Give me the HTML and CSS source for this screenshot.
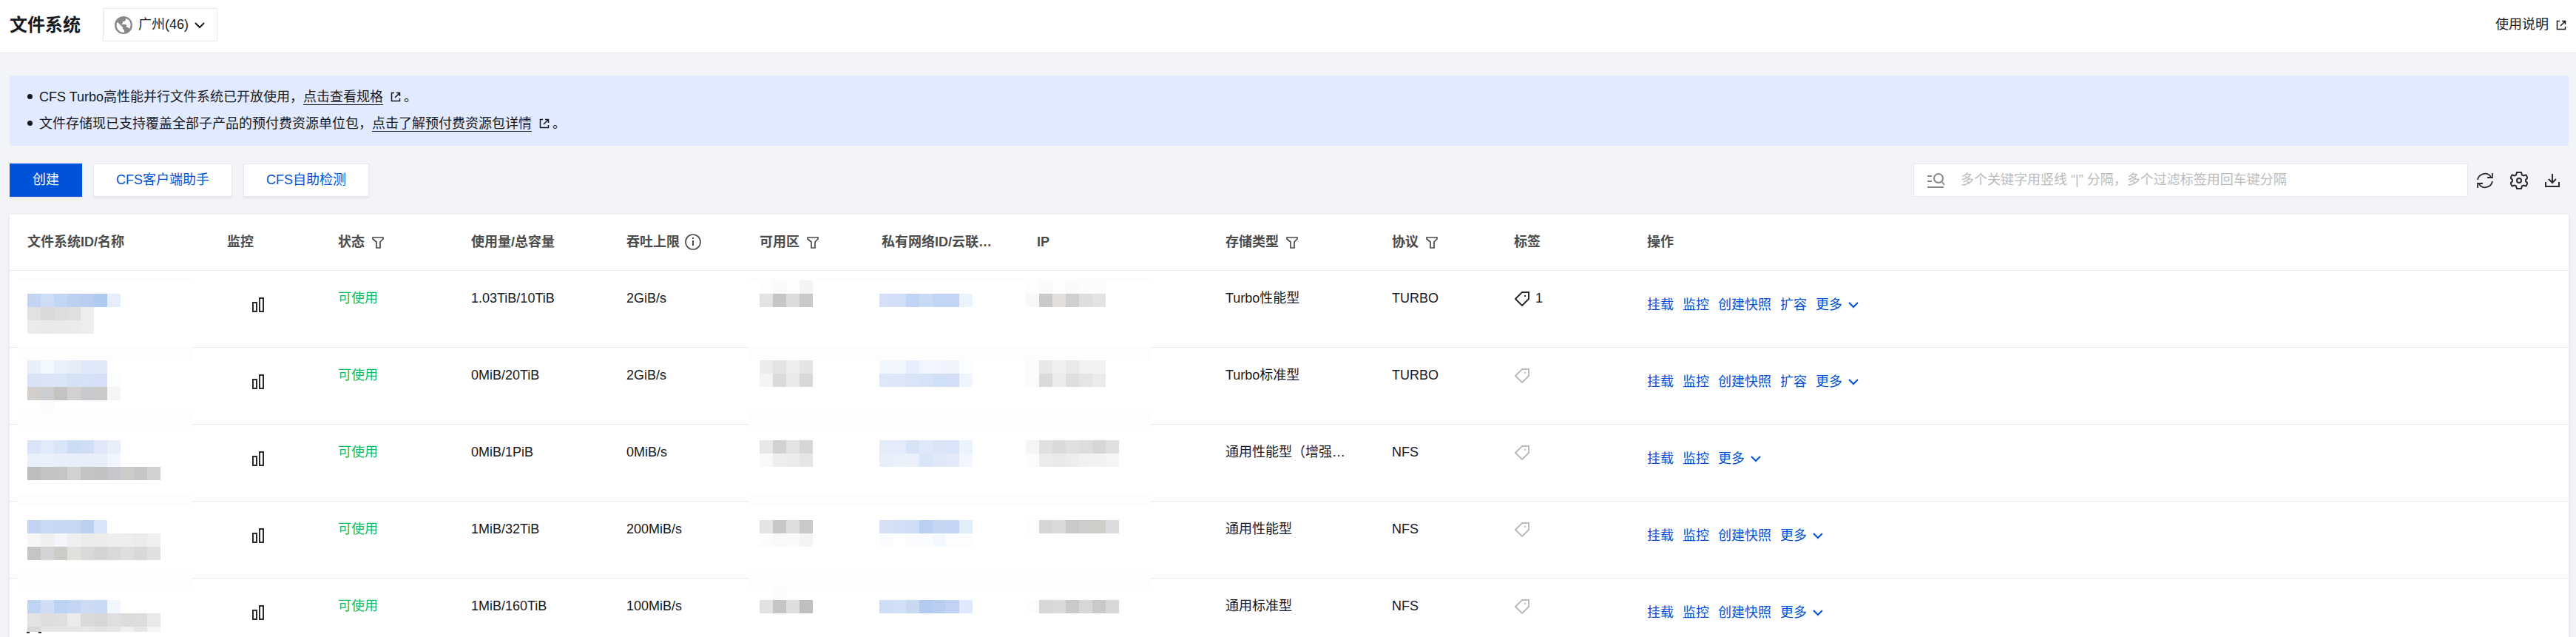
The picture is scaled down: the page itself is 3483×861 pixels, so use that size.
FILE: index.html
```html
<!DOCTYPE html>
<html lang="zh-CN">
<head>
    <meta charset="UTF-8">
    <meta name="viewport" content="width=device-width, initial-scale=1.0">
    <title>文件系统</title>
    <link rel="stylesheet" href="styles.css">
</head>
<body>

<!-- shared icons -->
<svg class="icon-defs" aria-hidden="true">
    <symbol id="i-globe" viewBox="0 0 24 24"><circle cx="12" cy="12" r="12" fill="#888"/><path d="M4 8l7 7v2l2 2v3C6 22 1 16 3 9zM15 3v2l-2 2h-2v2l-2 2h6l1 1v3h2l2 2c3-5 2-12-5-14z" fill="#fff"/></symbol>
    <symbol id="i-down" viewBox="0 0 14 12"><path d="M1 3l6 6 6-6" fill="none" stroke="currentColor" stroke-width="2"/></symbol>
    <symbol id="i-link" viewBox="0 0 14 14"><path d="M5 1.500H1.500v11h11V9M8 1.500h4.500V6M12 2L6 8" fill="none" stroke="currentColor" stroke-width="1.500"/></symbol>
    <symbol id="i-filter" viewBox="0 0 16 16"><path d="M1 1h14v2l-4 4v8H6V7L1 3z" fill="none" stroke="currentColor" stroke-width="1.700"/></symbol>
    <symbol id="i-info" viewBox="0 0 22 22"><circle cx="11" cy="11" r="10" fill="none" stroke="currentColor" stroke-width="1.700"/><path d="M10 5h2v2h-2zM10 9h2v7h-2z" fill="currentColor"/></symbol>
    <symbol id="i-bars" viewBox="0 0 16 20"><path d="M1 7h5v12H1zM10 1h5v18h-5z" fill="none" stroke="currentColor" stroke-width="2"/></symbol>
    <symbol id="i-tag" viewBox="0 0 20 20"><path d="M10 1h9v9l-9 9-9-9z" fill="none" stroke="currentColor" stroke-width="2"/><path d="M13 5h2v2h-2z" fill="currentColor"/></symbol>
    <symbol id="i-search" viewBox="0 0 24 20"><path d="M0 4h6M0 11h6M0 19h22M20 12l3 4" fill="none" stroke="currentColor" stroke-width="2"/><ellipse cx="15" cy="7" rx="6" ry="6" fill="none" stroke="currentColor" stroke-width="2"/></symbol>
    <symbol id="i-refresh" viewBox="0 0 22 22"><path d="M1 10a10 10 0 0 1 18-4M21 12a10 10 0 0 1-18 4M21 1v6h-7M1 21v-6h7" fill="none" stroke="currentColor" stroke-width="1.800"/></symbol>
    <symbol id="i-gear" viewBox="0 0 24 24"><path d="M9 1h6l1 3.500 2 1 3.500-1 2 4-2.500 2.500v2l2.500 2.500-2 4-3.500-1-2 1-1 3.500H9l-1-3.500-2-1-3.500 1-2-4L3 13v-2L.5 8.500l2-4 3.500 1 2-1z" fill="none" stroke="currentColor" stroke-width="2"/><circle cx="12" cy="12" r="3" fill="none" stroke="currentColor" stroke-width="2"/></symbol>
    <symbol id="i-download" viewBox="0 0 20 20"><path d="M10 1v12M5 8l5 5 5-5M1 12v6h18v-6" fill="none" stroke="currentColor" stroke-width="2"/></symbol>
</svg>

<header class="header">
    <h1>文件系统</h1>
    <button type="button" class="region">
        <svg width="24" height="24"><use href="#i-globe"/></svg>
        <span>广州(46)</span>
        <svg width="14" height="12"><use href="#i-down"/></svg>
    </button>
    <a class="help" href="#">使用说明<svg width="14" height="14"><use href="#i-link"/></svg></a>
</header>

<main class="content">
    <ul class="notice">
        <li>CFS Turbo高性能并行文件系统已开放使用，<a href="#">点击查看规格</a><svg width="14" height="14"><use href="#i-link"/></svg>。</li>
        <li>文件存储现已支持覆盖全部子产品的预付费资源单位包，<a href="#">点击了解预付费资源包详情</a><svg width="14" height="14"><use href="#i-link"/></svg>。</li>
    </ul>

    <div class="toolbar">
        <button type="button" class="btn btn-primary">创建</button>
        <button type="button" class="btn">CFS客户端助手</button>
        <button type="button" class="btn">CFS自助检测</button>
        <label class="search">
            <svg width="24" height="20"><use href="#i-search"/></svg>
            <input type="text" aria-label="搜索" placeholder="多个关键字用竖线 “|” 分隔，多个过滤标签用回车键分隔">
        </label>
        <div class="tools">
            <button type="button" aria-label="刷新"><svg width="22" height="22"><use href="#i-refresh"/></svg></button>
            <button type="button" aria-label="设置"><svg width="24" height="24"><use href="#i-gear"/></svg></button>
            <button type="button" aria-label="下载"><svg width="20" height="20"><use href="#i-download"/></svg></button>
        </div>
    </div>

    <div class="card">
        <table>
            <colgroup>
                <col class="c-id"><col class="c-monitor"><col class="c-status"><col class="c-usage"><col class="c-limit"><col class="c-zone">
                <col class="c-vpc"><col class="c-ip"><col class="c-type"><col class="c-proto"><col class="c-tag"><col>
            </colgroup>
            <thead>
                <tr>
                    <th>文件系统ID/名称</th>
                    <th>监控</th>
                    <th>状态<svg class="filter" width="16" height="16"><use href="#i-filter"/></svg></th>
                    <th>使用量/总容量</th>
                    <th>吞吐上限<svg class="info" width="22" height="22"><use href="#i-info"/></svg></th>
                    <th>可用区<svg class="filter" width="16" height="16"><use href="#i-filter"/></svg></th>
                    <th>私有网络ID/云联…</th>
                    <th>IP</th>
                    <th>存储类型<svg class="filter" width="16" height="16"><use href="#i-filter"/></svg></th>
                    <th>协议<svg class="filter" width="16" height="16"><use href="#i-filter"/></svg></th>
                    <th>标签</th>
                    <th>操作</th>
                </tr>
            </thead>
            <tbody>
                <tr>
                    <td></td>
                    <td class="monitor"><svg width="16" height="20"><use href="#i-bars"/></svg></td>
                    <td class="ok">可使用</td>
                    <td>1.03TiB/10TiB</td>
                    <td>2GiB/s</td>
                    <td></td><td></td><td></td>
                    <td>Turbo性能型</td>
                    <td>TURBO</td>
                    <td class="tag tag-on"><svg width="20" height="20"><use href="#i-tag"/></svg>1</td>
                    <td class="ops"><a href="#">挂载</a><a href="#">监控</a><a href="#">创建快照</a><a href="#">扩容</a><a href="#">更多<svg width="14" height="12"><use href="#i-down"/></svg></a></td>
                </tr>
                <tr>
                    <td></td>
                    <td class="monitor"><svg width="16" height="20"><use href="#i-bars"/></svg></td>
                    <td class="ok">可使用</td>
                    <td>0MiB/20TiB</td>
                    <td>2GiB/s</td>
                    <td></td><td></td><td></td>
                    <td>Turbo标准型</td>
                    <td>TURBO</td>
                    <td class="tag"><svg width="20" height="20"><use href="#i-tag"/></svg></td>
                    <td class="ops"><a href="#">挂载</a><a href="#">监控</a><a href="#">创建快照</a><a href="#">扩容</a><a href="#">更多<svg width="14" height="12"><use href="#i-down"/></svg></a></td>
                </tr>
                <tr>
                    <td></td>
                    <td class="monitor"><svg width="16" height="20"><use href="#i-bars"/></svg></td>
                    <td class="ok">可使用</td>
                    <td>0MiB/1PiB</td>
                    <td>0MiB/s</td>
                    <td></td><td></td><td></td>
                    <td>通用性能型（增强…</td>
                    <td>NFS</td>
                    <td class="tag"><svg width="20" height="20"><use href="#i-tag"/></svg></td>
                    <td class="ops"><a href="#">挂载</a><a href="#">监控</a><a href="#">更多<svg width="14" height="12"><use href="#i-down"/></svg></a></td>
                </tr>
                <tr>
                    <td></td>
                    <td class="monitor"><svg width="16" height="20"><use href="#i-bars"/></svg></td>
                    <td class="ok">可使用</td>
                    <td>1MiB/32TiB</td>
                    <td>200MiB/s</td>
                    <td></td><td></td><td></td>
                    <td>通用性能型</td>
                    <td>NFS</td>
                    <td class="tag"><svg width="20" height="20"><use href="#i-tag"/></svg></td>
                    <td class="ops"><a href="#">挂载</a><a href="#">监控</a><a href="#">创建快照</a><a href="#">更多<svg width="14" height="12"><use href="#i-down"/></svg></a></td>
                </tr>
                <tr>
                    <td></td>
                    <td class="monitor"><svg width="16" height="20"><use href="#i-bars"/></svg></td>
                    <td class="ok">可使用</td>
                    <td>1MiB/160TiB</td>
                    <td>100MiB/s</td>
                    <td></td><td></td><td></td>
                    <td>通用标准型</td>
                    <td>NFS</td>
                    <td class="tag"><svg width="20" height="20"><use href="#i-tag"/></svg></td>
                    <td class="ops"><a href="#">挂载</a><a href="#">监控</a><a href="#">创建快照</a><a href="#">更多<svg width="14" height="12"><use href="#i-down"/></svg></a></td>
                </tr>
            </tbody>
        </table>
        <!-- mosaics that hide ids, zones, networks and addresses -->
        <svg class="mask mask-id" id="maskId" width="236" height="482"></svg>
        <svg class="mask mask-net" id="maskNet" width="544" height="482"></svg>
    </div>
</main>

<script src="mask.js"></script>
</body>
</html>
```

FILE: mask.js
```js
// mosaic tiles: [row, first column, tile colours]
const SIZE = 18;
const HEIGHT = 478;

const idTiles = [
  [1, 0, "c3d3f2 cfdcf5 c2d6f3 bdd0f2 bacdf0 b0c9f1 e6eefb"],
  [2, 0, "e1e1e1 dad8d9 dddddd dfe1e0 ededed"],
  [3, 0, "ebebeb ebe8e9 e9ebea ebebeb ededed"],
  [6, 0, "e8effb f3f7ff e8f0fb e6edf9 dfe9f9 e0e9f7"],
  [7, 0, "d9e3f7 dae5f6 d9e6f7 d5e1f5 d6e2f5 d5e0f8 fcfdff"],
  [8, 0, "d2cecb cccdd1 c4c3c1 d3d1cf c9cace cacaca f5f5f5"],
  [9, 1, "fbfbfb"],
  [12, 0, "dae4f8 e1eaf9 d9e6f8 ccdcf5 cfddf5 dfe7f9 e8eefa"],
  [13, 0, "e9effb ebf1fc e8effb e8effb e8effb e7effb f1f5ff"],
  [14, 0, "bfbcbd c3c3c4 c5c5c5 d3d1cf c4c4c4 c3c1bf c6c7cc cdcbca c5c6c8 d2d2d2"],
  [18, 0, "c2d2f2 c9d8f4 c7d7f4 c6d6f3 bed0f1 d9e5f9"],
  [19, 0, "f6f6f6 f0f0f0 f3f5fa eeeff0 ebebeb ececea eeeeee ededeb ebebea efefef"],
  [20, 0, "c7c4c5 d3d4d5 cbcbc8 e0e0dd d9d9d9 d4d3d1 d8d9db e0dedc d7d8da dfe1e0"],
  [24, 0, "bfd3f3 d0def5 bdd3f4 c3d5f4 cddaf4 c9d9f4 f2f6fe"],
  [25, 0, "e3e3e3 dedede dfdfdf ebebeb dadada d8d7d5 dedfe1 dedcdb dcdddf e9e9e9"],
  [26, 0, "dad8d6 e4e5e6 e5e5e5 e5e5e5 e7e7e7 e4e4e4 e5e6e8 f0f0f0 e6e6e6 f5f5f5"]
];

const netTiles = [
  [0, 0, "fdfdfd fafafa fdfdfd f4f4f4"],
  [0, 20, "fdfdfd fafafa fdfdfd f9fbfa fcfcfc fcfcfc"],
  [1, 0, "e3e3e3 c6c6c6 dcdcdc c9c9c9"],
  [1, 9, "d5e0f8 d0dff7 c1d4f5 c8daf4 c2d5f4 c3d4f4 ebf3fd"],
  [1, 20, "f9f8f7 c9cacc e2dfdd cfcfcf dcdfdd e3e3e3"],
  [6, 0, "ebedec e3e3e3 eeeeee e4e4e4"],
  [6, 9, "f2f6ff f2f6ff e7eefb f0f5ff f0f5ff eff4fc fcfdff"],
  [6, 20, "fbfbfb e7e9e8 f0f0f0 e9e9e9 f2f2f2 f2f2f2"],
  [7, 0, "f4f4f4 dadada eaeaea d8d8d8"],
  [7, 9, "dfe8fa dce6f7 d8e5f8 d6e2f8 cfdff5 d2dff6 eff4fe"],
  [7, 20, "fbfbfb dadada ececea dcdfdd e5e5e5 ebebeb"],
  [12, 0, "e8e8e8 d2d2d2 e3e3e3 d6d6d6"],
  [12, 9, "e4ecf9 e4ebfa d6e3f7 dfe9f9 dae6f8 d9e4f8 eaf3fb"],
  [12, 20, "f6f5f3 e0e0e0 dadada e0e0e0 dcdddf d8d6d4 dedfe1"],
  [13, 0, "f9f9f9 eeeeee ececec e6e6e6"],
  [13, 9, "e7eefa e9f1fb e9f0fa d9e5f8 e0e9f8 e3e9f8 f2f6ff"],
  [13, 20, "fcfcfc ebedec eaeaea ededed f1f1f1 f2f2f2 f5f5f5"],
  [18, 0, "e3e5e4 c7c7c7 dedede cacaca"],
  [18, 9, "d6e1f8 d1dff6 cedcf5 bad0f2 c4d6f3 c5d5f5 e1edf8"],
  [18, 20, "fdfdfd d6d6d6 dadada c9c9c9 cecece cfcecb dbdcde"],
  [19, 0, "fcfcfc f9f9f9 fafafa f4f4f4"],
  [19, 9, "fafcff ffffff fafcff fafcff f4f8ff fdfdff fcfdff"],
  [23, 1, "fcfcfc"],
  [24, 0, "e2e2e2 c5c5c5 dedede bfbfbf"],
  [24, 9, "cfddf5 d1dff6 c8d8f3 b3cbf1 b9cdf1 c4d3f3 deeafb"],
  [24, 20, "fdfdfd d7d7d7 dadada c9c9c9 d7d7d7 cbc9c7 d7d8da"]
];

function rect(svg, x, y, w, h, fill) {
  const r = document.createElementNS("http://www.w3.org/2000/svg", "rect");
  r.setAttribute("x", x);
  r.setAttribute("y", y);
  r.setAttribute("width", w);
  r.setAttribute("height", h);
  r.setAttribute("fill", fill);
  svg.appendChild(r);
}

function drawMask(id, left, tiles) {
  const svg = document.getElementById(id);
  const width = Number(svg.getAttribute("width"));
  rect(svg, 0, 0, width, HEIGHT, "#fff");
  rect(svg, 0, 0, width, 3, "#fdfdfd");
  // faint bands where the row borders were
  [5, 10, 16, 22].forEach(row => rect(svg, 0, 3 + row * SIZE, width, SIZE, "#fdfdfd"));
  tiles.forEach(([row, col, colors]) => {
    const y = 3 + row * SIZE;
    colors.split(" ").forEach((c, i) => {
      rect(svg, left + (col + i) * SIZE, y, SIZE, Math.min(SIZE, HEIGHT - y), "#" + c);
    });
  });
}

drawMask("maskId", 13, idTiles);
drawMask("maskNet", 15, netTiles);

// tips of the last name that stick out under the mosaic
const idSvg = document.getElementById("maskId");
rect(idSvg, 12, 478, 4, 2, "#333");
rect(idSvg, 28, 478, 4, 2, "#333");
```

FILE: styles.css
```css
* {
  box-sizing: border-box;
}

body {
  margin: 0;
  height: 100vh;
  overflow: hidden;
  background: #f2f4f8;
  color: #16181d;
  font: 18px/27px "Liberation Sans", "Noto Sans CJK SC", sans-serif;
}

a {
  color: inherit;
}

button {
  font: inherit;
  color: inherit;
  cursor: pointer;
}

svg {
  flex: none;
}

.icon-defs {
  display: none;
}

/* header */
.header {
  display: flex;
  align-items: center;
  height: 72px;
  padding: 0 13px 4px;
  background: #fff;
  border-bottom: 1px solid #e5e8ee;
}

.header h1 {
  margin: 0 30px 0 0;
  font-size: 24px;
  line-height: 36px;
}

.region {
  display: flex;
  align-items: center;
  gap: 8px;
  height: 45px;
  padding: 0 16px 0 15px;
  background: #fff;
  border: 1px solid #e5e8ee;
}

.help {
  display: flex;
  align-items: center;
  gap: 10px;
  margin-left: auto;
  text-decoration: none;
}

.content {
  padding: 30px 10px 0 13px;
}

/* notice */
.notice {
  margin: 0 0 24px;
  padding: 11px 24px 12px;
  background: #e1eaff;
  line-height: 36px;
  list-style: none;
}

.notice li::before {
  content: "";
  display: inline-block;
  width: 7px;
  height: 7px;
  margin-right: 9px;
  border-radius: 50%;
  background: #16181d;
  vertical-align: 3px;
}

.notice a {
  text-underline-offset: 4px;
}

.notice svg {
  margin: 0 4px 0 10px;
  vertical-align: -1px;
}

/* toolbar */
.toolbar {
  display: flex;
  align-items: center;
  gap: 15px;
  margin-bottom: 24px;
}

.btn {
  height: 45px;
  padding: 0 30px;
  background: #fff;
  border: 1px solid #e5e8ee;
  color: #0052d9;
  box-shadow: 0 2px 2px rgba(54, 58, 80, 0.06);
}

.btn-primary {
  background: #0052d9;
  border-color: #0052d9;
  color: #fff;
}

.search {
  display: flex;
  align-items: center;
  gap: 21px;
  width: 750px;
  height: 45px;
  margin-left: auto;
  padding: 0 18px;
  background: #fff;
  border: 1px solid #e5e8ee;
  color: #888;
}

.search input {
  flex: 1;
  padding: 0;
  border: 0;
  outline: 0;
  font: inherit;
}

.search input::placeholder {
  color: #bbb;
}

.tools {
  display: flex;
  align-items: center;
  gap: 23px;
  margin: 0 12px 0 -3px;
  color: #2a2b2e;
}

.tools button {
  display: flex;
  padding: 0;
  background: none;
  border: 0;
}

/* table */
.card {
  position: relative;
  background: #fff;
  box-shadow: 0 2px 6px rgba(54, 58, 80, 0.1);
}

table {
  width: 100%;
  border-collapse: separate;
  border-spacing: 0;
  table-layout: fixed;
}

.c-id { width: 279px; }
.c-monitor { width: 150px; }
.c-status { width: 180px; }
.c-usage { width: 210px; }
.c-limit { width: 180px; }
.c-zone { width: 165px; }
.c-vpc { width: 210px; }
.c-ip { width: 255px; }
.c-type { width: 225px; }
.c-proto { width: 165px; }
.c-tag { width: 180px; }

th,
td {
  padding: 0 15px;
  border-bottom: 1px solid #e7eaef;
  text-align: left;
  white-space: nowrap;
}

th:first-child {
  padding-left: 24px;
}

th {
  height: 76px;
  color: #4b4b4b;
}

td {
  height: 104px;
  padding-top: 24px;
  vertical-align: top;
}

.filter {
  margin-left: 10px;
  vertical-align: -3px;
}

.info {
  margin-left: 7px;
  vertical-align: -5px;
}

.monitor {
  padding-left: 49px;
  padding-top: 36px;
  color: #2a2b2e;
}

.ok {
  color: #0abf5b;
}

.tag {
  padding-left: 16px;
  color: #bbb;
}

.tag svg {
  margin-right: 8px;
  vertical-align: -5px;
}

.tag-on {
  color: #2a2b2e;
}

.ops {
  padding-top: 33px;
  color: #0052d9;
}

.ops a {
  margin-right: 12px;
  text-decoration: none;
}

.ops svg {
  margin-left: 8px;
}

.mask {
  position: absolute;
  top: 86px;
}

.mask-id { left: 11px; }
.mask-net { left: 999px; }
```
